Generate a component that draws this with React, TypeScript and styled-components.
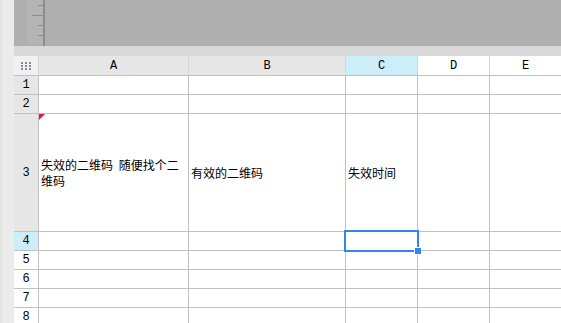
import { FC } from "react"
import styled, { createGlobalStyle, css } from "styled-components"

const GlobalStyle = createGlobalStyle`
  html, body {
    margin: 0;
    padding: 0;
    background: #ffffff;
  }
  body {
    font-family: "Noto Sans CJK SC", "Liberation Sans", sans-serif;
  }
`

const Page = styled.div`
  display: flex;
  width: 561px;
  height: 323px;
  overflow: hidden;
`
const SideStrip = styled.div`
  width: 14px;
  flex: none;
  background: #ebebeb;
  box-shadow: inset 2px 0 0 #e3e3e3;
`
const Main = styled.div`
  flex: 1;
  display: flex;
  flex-flow: column;
  min-width: 0;
`
const Toolbar = styled.div`
  height: 46px;
  flex: none;
  background: #b0b0b0;
  padding-left: 13px;
`
const Band = styled.div`
  height: 10px;
  flex: none;
  background: #d9d9d9;
`
const HeaderRow = styled.div`
  display: grid;
  grid-template-columns: 24px 149px 156px 71px 71px 1fr;
  grid-template-rows: 19px;
  column-gap: 1px;
  background: #d6d6d6;
  border-bottom: 1px solid #c0c0c0;
`
const Sheet = styled.div`
  display: grid;
  grid-template-columns: 24px 149px 156px 71px 71px 1fr;
  grid-template-rows: 18px 18px 117px 18px 18px 18px 18px 18px;
  gap: 1px;
  background: #c0c0c0;
`

type Tone = "used" | "active" | "plain"

const toneBg = (tone: Tone) =>
  tone === "used" ? "#e6e6e6" : tone === "active" ? "#cdeef9" : "#ffffff"

const HeadCell = styled.div<{ $tone: Tone }>`
  display: flex;
  align-items: center;
  justify-content: center;
  background: ${(p) => toneBg(p.$tone)};
  font-family: "Liberation Mono", "Courier New", monospace;
  font-size: 12px;
  color: #000;
`
const Corner = styled.div`
  display: flex;
  align-items: center;
  justify-content: center;
  background: #f1f1f4;
`
const Dots = styled.div`
  display: grid;
  grid-template-columns: repeat(3, 2px);
  grid-auto-rows: 2px;
  column-gap: 2px;
  row-gap: 1px;
  margin-top: 1px;
  span {
    background: #8a8a8a;
  }
`
const Cell = styled.div<{ $selected?: boolean }>`
  position: relative;
  display: flex;
  align-items: center;
  padding: 1px 2px 0 2px;
  background: #ffffff;
  font-size: 12px;
  line-height: 16px;
  color: #000;
  word-spacing: 3px;
  ${(p) =>
    p.$selected &&
    css`
      z-index: 1;
    `}
`
const CommentMark = styled.div`
  position: absolute;
  top: 0;
  left: 0;
  width: 0;
  height: 0;
  border-top: 6px solid #f0143a;
  border-right: 6px solid transparent;
`
const Selection = styled.div`
  position: absolute;
  top: -2px;
  left: -2px;
  right: -2px;
  bottom: -2px;
  border: 2px solid #3385ee;
`
const FillHandle = styled.div`
  position: absolute;
  left: 69px;
  top: 16px;
  width: 6px;
  height: 6px;
  background: #3385ee;
  box-shadow: 0 0 0 1px #ffffff;
`

const Ruler: FC = () => (
  <svg width="20" height="46" viewBox="0 0 20 46">
    <rect x="0" y="0" width="16" height="44" fill="#b4b4b4" />
    <rect x="16" y="0" width="2" height="46" fill="#8c8c8c" />
    <rect x="11" y="5" width="5" height="1" fill="#8c8c8c" />
    <rect x="5" y="15" width="11" height="1" fill="#8c8c8c" />
    <rect x="11" y="25" width="5" height="1" fill="#8c8c8c" />
    <rect x="11" y="35" width="5" height="1" fill="#8c8c8c" />
  </svg>
)

const columns: { name: string; tone: Tone }[] = [
  { name: "A", tone: "used" },
  { name: "B", tone: "used" },
  { name: "C", tone: "active" },
  { name: "D", tone: "plain" },
  { name: "E", tone: "plain" },
]

const rows: { n: number; tone: Tone; cells: string[] }[] = [
  { n: 1, tone: "used", cells: ["", "", "", "", ""] },
  { n: 2, tone: "used", cells: ["", "", "", "", ""] },
  {
    n: 3,
    tone: "used",
    cells: ["失效的二维码 随便找个二维码", "有效的二维码", "失效时间", "", ""],
  },
  { n: 4, tone: "active", cells: ["", "", "", "", ""] },
  { n: 5, tone: "plain", cells: ["", "", "", "", ""] },
  { n: 6, tone: "plain", cells: ["", "", "", "", ""] },
  { n: 7, tone: "plain", cells: ["", "", "", "", ""] },
  { n: 8, tone: "plain", cells: ["", "", "", "", ""] },
]

const App: FC = () => {
  return (
    <>
      <GlobalStyle />
      <Page>
        <SideStrip />
        <Main>
          <Toolbar>
            <Ruler />
          </Toolbar>
          <Band />
          <HeaderRow>
            <Corner>
              <Dots>
                {Array.from({ length: 9 }).map((_, i) => (
                  <span key={i} />
                ))}
              </Dots>
            </Corner>
            {columns.map((c) => (
              <HeadCell key={c.name} $tone={c.tone}>
                {c.name}
              </HeadCell>
            ))}
          </HeaderRow>
          <Sheet>
            {rows.map((r) => [
              <HeadCell key={`h${r.n}`} $tone={r.tone}>
                {r.n}
              </HeadCell>,
              ...r.cells.map((text, ci) => {
                const selected = r.n === 4 && ci === 2
                return (
                  <Cell key={`${r.n}-${ci}`} $selected={selected}>
                    {r.n === 3 && ci === 0 && <CommentMark />}
                    {text}
                    {selected && (
                      <Selection>
                        <FillHandle />
                      </Selection>
                    )}
                  </Cell>
                )
              }),
            ])}
          </Sheet>
        </Main>
      </Page>
    </>
  )
}

export default App
